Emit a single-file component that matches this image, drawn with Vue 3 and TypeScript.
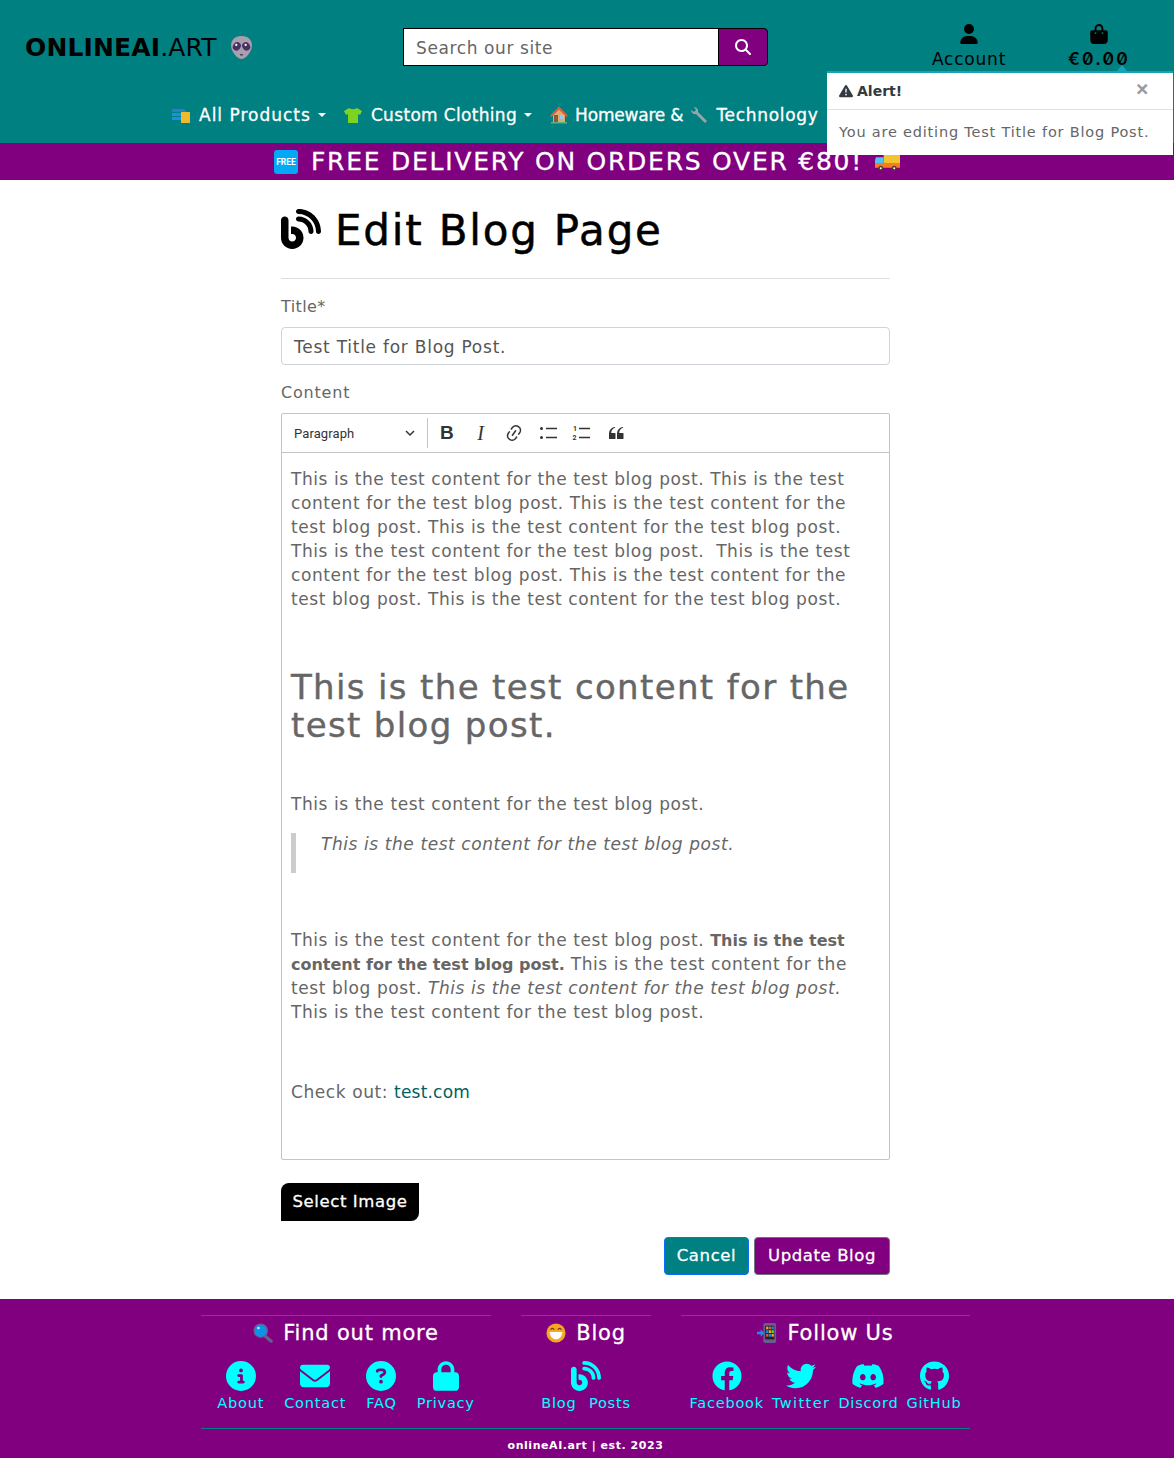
<script setup lang="ts">
const paths = {
  user: "M224 256A128 128 0 1 0 224 0a128 128 0 1 0 0 256zm-45.7 48C79.8 304 0 383.8 0 482.3C0 498.7 13.3 512 29.7 512H418.3c16.4 0 29.7-13.3 29.7-29.7C448 383.8 368.2 304 269.7 304H178.3z",
  bag: "M160 112c0-35.3 28.7-64 64-64s64 28.7 64 64v48H160V112zm-48 48H48c-26.5 0-48 21.5-48 48V416c0 53 43 96 96 96H352c53 0 96-43 96-96V208c0-26.5-21.5-48-48-48H336V112C336 50.1 285.9 0 224 0S112 50.1 112 112v48zm24 48a24 24 0 1 1 0 48 24 24 0 1 1 0-48zm152 24a24 24 0 1 1 48 0 24 24 0 1 1 -48 0z",
  search: "M416 208c0 45.9-14.9 88.3-40 122.7L502.6 457.4c12.5 12.5 12.5 32.8 0 45.3s-32.8 12.5-45.3 0L330.7 376c-34.4 25.2-76.8 40-122.7 40C93.1 416 0 322.9 0 208S93.1 0 208 0S416 93.1 416 208zM208 352a144 144 0 1 0 0-288 144 144 0 1 0 0 288z",
  warn: "M256 32c14.2 0 27.3 7.5 34.5 19.8l216 368c7.3 12.4 7.3 27.7 .2 40.1S486.3 480 472 480H40c-14.3 0-27.6-7.7-34.7-20.1s-7-27.8 .2-40.1l216-368C228.7 39.5 241.8 32 256 32zm0 128c-13.3 0-24 10.7-24 24V296c0 13.3 10.7 24 24 24s24-10.7 24-24V184c0-13.3-10.7-24-24-24zm32 224a32 32 0 1 0 -64 0 32 32 0 1 0 64 0z",
  blog: "M192 32c0 17.7 14.3 32 32 32c123.7 0 224 100.3 224 224c0 17.7 14.3 32 32 32s32-14.3 32-32C512 128.9 383.1 0 224 0c-17.7 0-32 14.3-32 32zm0 96c0 17.7 14.3 32 32 32c70.7 0 128 57.3 128 128c0 17.7 14.3 32 32 32s32-14.3 32-32c0-106-86-192-192-192c-17.7 0-32 14.3-32 32zM96 144c0-26.5-21.5-48-48-48S0 117.5 0 144V368c0 79.5 64.5 144 144 144s144-64.5 144-144s-64.5-144-144-144H128v96h16c26.5 0 48 21.5 48 48s-21.5 48-48 48s-48-21.5-48-48V144z",
  info: "M256 512A256 256 0 1 0 256 0a256 256 0 1 0 0 512zM216 336h24V272H216c-13.3 0-24-10.7-24-24s10.7-24 24-24h48c13.3 0 24 10.7 24 24v88h8c13.3 0 24 10.7 24 24s-10.7 24-24 24H216c-13.3 0-24-10.7-24-24s10.7-24 24-24zm40-208a32 32 0 1 1 0 64 32 32 0 1 1 0-64z",
  mail: "M48 64C21.5 64 0 85.5 0 112c0 15.1 7.1 29.3 19.2 38.4L236.8 313.6c11.4 8.5 27 8.5 38.4 0L492.8 150.4c12.1-9.1 19.2-23.3 19.2-38.4c0-26.5-21.5-48-48-48H48zM0 176V384c0 35.3 28.7 64 64 64H448c35.3 0 64-28.7 64-64V176L294.4 339.2c-22.8 17.1-54 17.1-76.8 0L0 176z",
  help: "M256 512A256 256 0 1 0 256 0a256 256 0 1 0 0 512zM169.8 165.3c7.9-22.3 29.1-37.3 52.8-37.3h58.3c34.9 0 63.1 28.3 63.1 63.1c0 22.6-12.1 43.5-31.7 54.8L280 264.4c-.2 13-10.9 23.6-24 23.6c-13.3 0-24-10.7-24-24V250.5c0-8.6 4.6-16.5 12.1-20.8l44.3-25.4c4.7-2.7 7.6-7.7 7.6-13.1c0-8.4-6.8-15.1-15.1-15.1H222.6c-3.4 0-6.4 2.1-7.5 5.3l-.4 1.2c-4.4 12.5-18.2 19-30.6 14.6s-19-18.2-14.6-30.6l.4-1.2zM224 352a32 32 0 1 1 64 0 32 32 0 1 1 -64 0z",
  lock: "M144 144v48H304V144c0-44.2-35.8-80-80-80s-80 35.8-80 80zM80 192V144C80 64.5 144.5 0 224 0s144 64.5 144 144v48h16c35.3 0 64 28.7 64 64V448c0 35.3-28.7 64-64 64H64c-35.3 0-64-28.7-64-64V256c0-35.3 28.7-64 64-64H80z",
  facebook: "M504 256C504 119 393 8 256 8S8 119 8 256c0 123.78 90.69 226.38 209.25 245V327.69h-63V256h63v-54.64c0-62.15 37-96.48 93.67-96.48 27.14 0 55.52 4.84 55.52 4.84v61h-31.28c-30.8 0-40.41 19.12-40.41 38.73V256h68.78l-11 71.69h-57.78V501C413.31 482.38 504 379.78 504 256z",
  twitter: "M459.37 151.716c.325 4.548.325 9.097.325 13.645 0 138.72-105.583 298.558-298.558 298.558-59.452 0-114.68-17.219-161.137-47.106 8.447.974 16.568 1.299 25.34 1.299 49.055 0 94.213-16.568 130.274-44.832-46.132-.975-84.792-31.188-98.112-72.772 6.498.974 12.995 1.624 19.818 1.624 9.421 0 18.843-1.3 27.614-3.573-48.081-9.747-84.143-51.98-84.143-102.985v-1.299c13.969 7.797 30.214 12.67 47.431 13.319-28.264-18.843-46.781-51.005-46.781-87.391 0-19.492 5.197-37.36 14.294-52.954 51.655 63.675 129.3 105.258 216.365 109.807-1.624-7.797-2.599-15.918-2.599-24.04 0-57.828 46.782-104.934 104.934-104.934 30.213 0 57.502 12.67 76.67 33.137 23.715-4.548 46.456-13.32 66.599-25.34-7.798 24.366-24.366 44.833-46.132 57.827 21.117-2.273 41.584-8.122 60.426-16.243-14.292 20.791-32.161 39.308-52.628 54.253z",
  discord: "M524.531,69.836a1.5,1.5,0,0,0-.764-.7A485.065,485.065,0,0,0,404.081,32.03a1.816,1.816,0,0,0-1.923.91,337.461,337.461,0,0,0-14.9,30.6,447.848,447.848,0,0,0-134.426,0,309.541,309.541,0,0,0-15.135-30.6,1.89,1.89,0,0,0-1.924-.91A483.689,483.689,0,0,0,116.085,69.137a1.712,1.712,0,0,0-.788.676C39.068,183.651,18.186,294.69,28.43,404.354a2.016,2.016,0,0,0,.765,1.375A487.666,487.666,0,0,0,176.02,479.918a1.9,1.9,0,0,0,2.063-.676A348.2,348.2,0,0,0,208.12,430.4a1.86,1.86,0,0,0-1.019-2.588,321.173,321.173,0,0,1-45.868-21.853,1.885,1.885,0,0,1-.185-3.126c3.082-2.309,6.166-4.711,9.109-7.137a1.819,1.819,0,0,1,1.9-.256c96.229,43.917,200.41,43.917,295.5,0a1.812,1.812,0,0,1,1.924.233c2.944,2.426,6.027,4.851,9.132,7.16a1.884,1.884,0,0,1-.162,3.126,301.407,301.407,0,0,1-45.89,21.83,1.875,1.875,0,0,0-1,2.611,391.055,391.055,0,0,0,30.014,48.815,1.864,1.864,0,0,0,2.063.7A486.048,486.048,0,0,0,610.7,405.729a1.882,1.882,0,0,0,.765-1.352C623.729,277.594,590.933,167.465,524.531,69.836ZM222.491,337.58c-28.972,0-52.844-26.587-52.844-59.239S193.056,219.1,222.491,219.1c29.665,0,53.306,26.82,52.843,59.239C275.334,310.993,251.924,337.58,222.491,337.58Zm195.38,0c-28.971,0-52.843-26.587-52.843-59.239S388.437,219.1,417.871,219.1c29.667,0,53.307,26.82,52.844,59.239C470.715,310.993,447.538,337.58,417.871,337.58Z",
  github: "M165.9 397.4c0 2-2.3 3.6-5.2 3.6-3.3 0-5.6-1.6-5.6-3.6 0-2 2.3-3.6 5.2-3.6 3-.3 5.6 1.3 5.6 3.6zm-31.1-4.5c-.7 2 1.3 4.3 4.3 4.9 2.6 1 5.6 0 6.2-2s-1.3-4.3-4.3-5.2c-2.6-.7-5.5.3-6.2 2.3zm44.2-1.7c-2.9.7-4.9 2.6-4.6 4.9.3 2 2.9 3.3 5.9 2.6 2.9-.7 4.9-2.6 4.6-4.6-.3-1.9-3-3.2-5.9-2.9zM244.8 8C106.1 8 0 113.3 0 252c0 110.9 69.8 205.8 169.5 239.2 12.8 2.3 17.3-5.6 17.3-12.1 0-6.2-.3-40.4-.3-61.4 0 0-70 15-84.7-29.8 0 0-11.4-29.1-27.8-36.6 0 0-22.9-15.7 1.6-15.4 0 0 24.9 2 38.6 25.8 21.9 38.6 58.6 27.5 72.9 20.9 2.3-16 8.8-27.1 16-33.7-55.9-6.2-112.3-14.3-112.3-110.5 0-27.5 7.6-41.3 23.6-58.9-2.6-6.5-11.1-33.3 2.6-67.9 20.9-6.5 69 27 69 27 20-5.6 41.5-8.5 62.8-8.5s42.8 2.9 62.8 8.5c0 0 48.1-33.6 69-27 13.7 34.7 5.2 61.4 2.6 67.9 16 17.7 25.8 31.5 25.8 58.9 0 96.5-58.9 104.2-114.8 110.5 9.2 7.9 17 22.9 17 46.4 0 33.7-.3 75.4-.3 83.6 0 6.5 4.6 14.4 17.3 12.1C428.2 457.8 496 362.9 496 252 496 113.3 383.5 8 244.8 8z",
};

const infoLinks = [
  { label: "About", box: "0 0 512 512", d: paths.info, w: 30 },
  { label: "Contact", box: "0 0 512 512", d: paths.mail, w: 30 },
  { label: "FAQ", box: "0 0 512 512", d: paths.help, w: 30 },
  { label: "Privacy", box: "0 0 448 512", d: paths.lock, w: 26 },
];
const followLinks = [
  { label: "Facebook", box: "0 0 512 512", d: paths.facebook, w: 30 },
  { label: "Twitter", box: "0 0 512 512", d: paths.twitter, w: 30 },
  { label: "Discord", box: "0 0 640 512", d: paths.discord, w: 34 },
  { label: "GitHub", box: "0 0 496 512", d: paths.github, w: 29 },
];
</script>

<template>
  <div class="page">
    <header class="site-head">
      <div class="top-row">
        <div class="logo">
          <span class="logo-text">ONLINEAI<span class="logo-thin">.ART</span></span>
          <svg class="alien" viewBox="0 0 24 24">
            <path d="M12 1C5.5 1 2 5 2 10c0 6 6 13 10 13s10-7 10-13c0-5-3.500-9-10-9z" fill="#a99fae" />
            <ellipse cx="7.500" cy="11" rx="3.600" ry="4.200" fill="#4a2f63" transform="rotate(35 7.500 11)" />
            <ellipse cx="16.500" cy="11" rx="3.600" ry="4.200" fill="#4a2f63" transform="rotate(-35 16.500 11)" />
            <circle cx="7" cy="9.500" r="1.100" fill="#fff" />
            <circle cx="16" cy="9.500" r="1.100" fill="#fff" />
            <path d="M10.500 19h3" stroke="#4a2f63" stroke-width="1.200" />
          </svg>
        </div>
        <div class="search">
          <div class="search-input">Search our site</div>
          <div class="search-btn">
            <svg viewBox="0 0 512 512" width="16" height="16"><path :d="paths.search" fill="#fff" /></svg>
          </div>
        </div>
        <div class="head-link account">
          <svg viewBox="0 0 448 512" width="18" height="20"><path :d="paths.user" fill="#000" /></svg>
          <span>Account</span>
        </div>
        <div class="head-link">
          <svg viewBox="0 0 448 512" width="18" height="20"><path :d="paths.bag" fill="#000" /></svg>
          <span class="price">€0.00</span>
        </div>
      </div>
      <nav class="nav-row">
        <svg class="emo" viewBox="0 0 18 18">
          <rect x="0" y="3" width="12" height="3" fill="#1b8fe0" />
          <rect x="0" y="7" width="12" height="3" fill="#1b8fe0" />
          <rect x="0" y="11" width="12" height="3" fill="#1b8fe0" />
          <rect x="9" y="6" width="9" height="11" fill="#efb92e" />
          <path d="M0 3h12l2 2v1H0z" fill="#2a7fc9" />
        </svg>
        <span class="nav-item n-all">All Products</span><i class="caret"></i>
        <svg class="emo emo-b" viewBox="0 0 18 18">
          <path d="M5 2c1.500 1.500 6.500 1.500 8 0l5 3-2 4-2-1v9H4V8L2 9 0 5z" fill="#7ed321" />
        </svg>
        <span class="nav-item n-custom">Custom Clothing</span><i class="caret"></i>
        <svg class="emo emo-c" viewBox="0 0 18 18">
          <path d="M9 1 1 9h2v7h12V9h2z" fill="#e0a96d" />
          <path d="M9 1 0 10l1.500 1L9 3.500 16.500 11 18 10z" fill="#e5543b" />
          <rect x="4" y="9" width="4" height="7" fill="#8a5a3c" />
          <rect x="10" y="9" width="4" height="4" fill="#8ccdf0" />
          <rect x="1" y="16" width="16" height="1.500" fill="#59b383" />
        </svg>
        <span class="nav-item n-home">Homeware &amp;</span>
        <svg class="emo emo-d" viewBox="0 0 18 18">
          <path d="M1 4a4 4 0 0 0 5 4l9 9 2-2-9-9a4 4 0 0 0-4-5l2 3-2 2z" fill="#9aa4ad" />
        </svg>
        <span class="nav-item n-tech">Technology</span>
      </nav>
      <div class="banner">
        <svg class="free" viewBox="0 0 24 24">
          <rect width="24" height="24" rx="3" fill="#03a9f4" />
          <text x="12" y="15" text-anchor="middle" font-size="8.500" font-weight="700" font-family="Roboto, sans-serif" fill="#fff">FREE</text>
        </svg>
        <span>FREE DELIVERY ON ORDERS OVER €80!</span>
        <svg class="truck" viewBox="0 0 26 20">
          <path d="M9 0h17v13H9z" fill="#f4c430" />
          <path d="M1 5h8v9H0V8z" fill="#4fc3f7" />
          <path d="M0 11h26v5H0z" fill="#f57c20" />
          <circle cx="6" cy="16.500" r="2.500" fill="#5a3a2e" />
          <circle cx="20" cy="16.500" r="2.500" fill="#5a3a2e" />
          <circle cx="6" cy="16.500" r="1" fill="#fff" />
          <circle cx="20" cy="16.500" r="1" fill="#fff" />
        </svg>
      </div>

      <div class="alert">
        <i class="alert-arrow"></i>
        <div class="alert-head">
          <svg viewBox="0 0 512 512" width="14" height="14"><path :d="paths.warn" fill="#343a40" /></svg>
          <strong>Alert!</strong>
          <span class="alert-x">✕</span>
        </div>
        <div class="alert-body">You are editing Test Title for Blog Post.</div>
      </div>
    </header>

    <main class="content">
      <h1 class="title">
        <svg viewBox="0 0 512 512" width="40" height="40"><path :d="paths.blog" fill="#000" /></svg>
        <span>Edit Blog Page</span>
      </h1>
      <hr class="rule" />
      <label class="field-label">Title*</label>
      <div class="text-input">Test Title for Blog Post.</div>
      <label class="field-label second">Content</label>

      <div class="editor">
        <div class="toolbar">
          <div class="style-pick">
            <span>Paragraph</span>
            <svg viewBox="0 0 10 10" width="10" height="10"><path d="M1 3l4 4 4-4" fill="none" stroke="#333" stroke-width="1.500" /></svg>
          </div>
          <span class="tool-sep"></span>
          <span class="tool t-bold">B</span>
          <span class="tool t-ital">I</span>
          <span class="tool">
            <svg viewBox="0 0 20 20" width="20" height="20"><path fill="#333" d="m11.077 15 .991-1.416a.75.75 0 1 1 1.229.86l-1.148 1.64a.748.748 0 0 1-.217.206 5.251 5.251 0 0 1-8.503-5.955.741.741 0 0 1 .12-.274l1.147-1.639a.75.75 0 1 1 1.228.86L4.933 10.7l.006.003a3.75 3.75 0 0 0 6.132 4.294l.006.004zm5.494-5.335a.748.748 0 0 1-.12.274l-1.147 1.639a.75.75 0 1 1-1.228-.86l.86-1.23a3.75 3.75 0 0 0-6.144-4.301l-.86 1.229a.75.75 0 0 1-1.229-.86l1.148-1.64a.748.748 0 0 1 .217-.206 5.251 5.251 0 0 1 8.503 5.955zm-4.563-2.532a.75.75 0 0 1 .184 1.045l-3.155 4.505a.75.75 0 1 1-1.229-.86l3.155-4.506a.75.75 0 0 1 1.045-.184z" /></svg>
          </span>
          <span class="tool">
            <svg viewBox="-1 0 20 20" width="20" height="20">
              <circle cx="2.500" cy="5.500" r="1.500" fill="#333" /><circle cx="2.500" cy="14.500" r="1.500" fill="#333" />
              <path d="M7 5.500h11M7 14.500h11" stroke="#333" stroke-width="1.500" />
            </svg>
          </span>
          <span class="tool">
            <svg viewBox="0 0 20 20" width="20" height="20">
              <text x="1" y="8" font-size="7" font-weight="700" font-family="Roboto, sans-serif" fill="#333">1</text>
              <text x="0.500" y="17" font-size="7" font-weight="700" font-family="Roboto, sans-serif" fill="#333">2</text>
              <path d="M7 5.500h11M7 14.500h11" stroke="#333" stroke-width="1.500" />
            </svg>
          </span>
          <span class="tool">
            <svg viewBox="0 0 20 20" width="20" height="20"><path fill="#333" d="M3 10.423a6.5 6.5 0 0 1 6.056-6.408l.038.67C6.448 5.423 5.354 7.663 5.22 10H9c.552 0 .5.432.5.986v4.511c0 .554-.448.503-1 .503h-5c-.552 0-.5-.449-.5-1.003v-4.574zm8 0a6.5 6.5 0 0 1 6.056-6.408l.038.67c-2.646.739-3.74 2.979-3.873 5.315H17c.552 0 .5.432.5.986v4.511c0 .554-.448.503-1 .503h-5c-.552 0-.5-.449-.5-1.003v-4.574z" /></svg>
          </span>
        </div>
        <div class="editor-body">
          <p>This is the test content for the test blog post. This is the test<br />content for the test blog post. This is the test content for the<br />test blog post. This is the test content for the test blog post.<br />This is the test content for the test blog post.&nbsp; This is the test<br />content for the test blog post. This is the test content for the<br />test blog post. This is the test content for the test blog post.</p>
          <h2>This is the test content for the<br />test blog post.</h2>
          <p class="after-h2">This is the test content for the test blog post.</p>
          <blockquote>This is the test content for the test blog post.</blockquote>
          <p class="after-quote">This is the test content for the test blog post. <strong>This is the test<br />content for the test blog post.</strong> This is the test content for the<br />test blog post. <em>This is the test content for the test blog post.</em><br />This is the test content for the test blog post.</p>
          <p class="check">Check out: <a>test.com</a></p>
        </div>
      </div>

      <div class="btn btn-image">Select Image</div>
      <div class="actions">
        <div class="btn btn-cancel">Cancel</div>
        <div class="btn btn-update">Update Blog</div>
      </div>
    </main>

    <footer class="site-foot">
      <div class="foot-cols">
        <section class="foot-col col-info">
          <h3>
            <svg class="h-emo" viewBox="0 0 22 22">
              <path d="M13 14l7 6" stroke="#6b5b95" stroke-width="3.500" stroke-linecap="round" />
              <circle cx="8.500" cy="8.500" r="8" fill="#6b5b95" />
              <circle cx="8.500" cy="8.500" r="6.500" fill="#0b93e8" />
              <circle cx="6" cy="5.500" r="1.500" fill="#bfe6ff" />
            </svg>
            Find out more
          </h3>
          <div class="foot-links">
            <div v-for="l in infoLinks" :key="l.label" class="foot-link">
              <svg :viewBox="l.box" :width="l.w" height="30"><path :d="l.d" fill="#00ffff" /></svg>
              <span>{{ l.label }}</span>
            </div>
          </div>
        </section>
        <section class="foot-col col-blog">
          <h3>
            <svg class="h-emo" viewBox="0 0 22 22">
              <circle cx="11" cy="11" r="10.500" fill="#f5a623" />
              <path d="M4 10h14c0 4.500-3 8-7 8s-7-3.500-7-8z" fill="#fff" />
              <path d="M5 7.500c1-2 3-2 4 0M13 7.500c1-2 3-2 4 0" fill="none" stroke="#6d3a10" stroke-width="1.300" />
            </svg>
            Blog
          </h3>
          <div class="foot-links">
            <div class="foot-link blog-link">
              <svg viewBox="0 0 512 512" width="30" height="30"><path :d="paths.blog" fill="#00ffff" /></svg>
              <span>Blog Posts</span>
            </div>
          </div>
        </section>
        <section class="foot-col col-follow">
          <h3>
            <svg class="h-emo" viewBox="0 0 22 22">
              <rect x="7" y="0" width="14" height="22" rx="2" fill="#6b5b95" />
              <rect x="9" y="3" width="10" height="15" fill="#222" />
              <rect x="10" y="4" width="2.500" height="3" fill="#f5a623" /><rect x="13" y="4" width="2.500" height="3" fill="#e5543b" /><rect x="16" y="4" width="2.500" height="3" fill="#0b93e8" />
              <rect x="10" y="8" width="2.500" height="3" fill="#0b93e8" /><rect x="13" y="8" width="2.500" height="3" fill="#f5a623" /><rect x="16" y="8" width="2.500" height="3" fill="#7ed321" />
              <rect x="10" y="12" width="2.500" height="3" fill="#e5543b" /><rect x="13" y="12" width="2.500" height="3" fill="#0b93e8" /><rect x="16" y="12" width="2.500" height="3" fill="#f5a623" />
              <path d="M0 9.500h4V7l4 4-4 4v-2.500H0z" fill="#1b8fe0" />
            </svg>
            Follow Us
          </h3>
          <div class="foot-links">
            <div v-for="l in followLinks" :key="l.label" class="foot-link">
              <svg :viewBox="l.box" :width="l.w" height="30"><path :d="l.d" fill="#00ffff" /></svg>
              <span>{{ l.label }}</span>
            </div>
          </div>
        </section>
      </div>
      <div class="copyright">onlineAI.art | est. 2023</div>
    </footer>
  </div>
</template>

<style>
html,
body {
  margin: 0;
  background: #fff;
}
</style>

<style scoped>
.page {
  font-family: "DejaVu Sans", sans-serif;
  color: #666;
  width: 1174px;
  height: 1458px;
  overflow: hidden;
}

/* header */
.site-head {
  position: relative;
  background: #008080;
}
.top-row {
  display: flex;
  height: 93px;
  padding-top: 28px;
  box-sizing: border-box;
}
.logo {
  width: 403px;
  padding-left: 25px;
  box-sizing: border-box;
  display: flex;
  align-items: center;
  height: 38px;
  color: #000;
  font-size: 25px;
  letter-spacing: 0.15px;
  font-weight: 700;
}
.logo-thin {
  font-weight: 400;
}
.alien {
  width: 25px;
  height: 25px;
  margin-left: 12px;
}
.search {
  width: 365px;
  height: 38px;
  display: flex;
}
.search-input {
  flex: 1;
  background: #fff;
  border: 1px solid #000;
  box-sizing: border-box;
  padding: 0 12px;
  line-height: 38px;
  font-size: 17px;
  letter-spacing: 0.6px;
  color: #666;
  white-space: nowrap;
}
.search-btn {
  width: 50px;
  margin-left: -1px;
  background: #800080;
  border: 1px solid #000;
  border-radius: 0 4px 4px 0;
  box-sizing: border-box;
  display: flex;
  align-items: center;
  justify-content: center;
}
.head-link {
  width: 130px;
  height: 46px;
  margin-top: -4px;
  display: flex;
  flex-direction: column;
  align-items: center;
  color: #000;
  font-size: 17px;
  letter-spacing: 0.8px;
  line-height: 22px;
  gap: 4px;
}
.account {
  margin-left: 136px;
}
.price {
  font-family: Inter, sans-serif;
  font-weight: 600;
  font-size: 17.500px;
  letter-spacing: 2.200px;
  font-feature-settings: "zero";
}
.nav-row {
  height: 50px;
  padding-left: 172px;
  display: flex;
  align-items: center;
  color: #fff;
  font-size: 17px;
  box-sizing: border-box;
  padding-bottom: 7px;
}
.nav-item {
  white-space: nowrap;
  -webkit-text-stroke: 0.3px #fff;
}
.n-all {
  letter-spacing: 1px;
}
.n-custom {
  letter-spacing: 0.33px;
}
.n-home {
  letter-spacing: -0.2px;
}
.n-tech {
  letter-spacing: 0.7px;
}
.emo {
  width: 18px;
  height: 18px;
  margin-right: 9px;
  flex: none;
}
.emo-b {
  margin-left: 18px;
}
.emo-c {
  margin-left: 18px;
  margin-right: 7px;
}
.emo-d {
  margin-left: 7px;
  margin-right: 8px;
}
.caret {
  width: 0;
  height: 0;
  margin-left: 7px;
  border-left: 4px solid transparent;
  border-right: 4px solid transparent;
  border-top: 4px solid #fff;
}
.banner {
  height: 37px;
  background: #800080;
  color: #fff;
  font-size: 25px;
  letter-spacing: 1.750px;
  -webkit-text-stroke: 0.3px #fff;
  display: flex;
  align-items: center;
  justify-content: center;
  white-space: nowrap;
}
.free {
  width: 24px;
  height: 24px;
  margin-right: 13px;
}
.free text {
  letter-spacing: 0;
  -webkit-text-stroke: 0;
}
.truck {
  width: 25px;
  height: 20px;
  margin-left: 12px;
}
.alert {
  position: absolute;
  left: 827px;
  top: 71px;
  width: 346px;
  height: 84px;
  background: #fff;
  border-top: 2px solid #17a2b8;
  box-sizing: border-box;
}
.alert-arrow {
  position: absolute;
  left: 290px;
  top: -8px;
  width: 0;
  height: 0;
  border-left: 5px solid transparent;
  border-right: 5px solid transparent;
  border-bottom: 6px solid #17a2b8;
}
.alert-head {
  height: 36px;
  border-bottom: 1px solid #dee2e6;
  display: flex;
  align-items: center;
  padding: 0 12px;
  color: #343a40;
  font-size: 14px;
  gap: 4px;
}
.alert-x {
  margin-left: auto;
  margin-top: -4px;
  margin-right: 12px;
  color: #999;
  font-weight: 700;
  font-size: 16px;
  -webkit-text-stroke: 0.8px #999;
}
.alert-body {
  padding: 0 12px;
  line-height: 44px;
  font-size: 14.500px;
  letter-spacing: 0.8px;
  color: #666;
  white-space: nowrap;
}

/* main form */
.content {
  width: 609px;
  margin-left: 281px;
  height: 1119px;
}
.title {
  display: flex;
  align-items: center;
  gap: 14px;
  height: 98px;
  margin: 0;
  padding-top: 2px;
  box-sizing: border-box;
  color: #000;
  font-size: 42px;
  letter-spacing: 1.800px;
  font-weight: 400;
  white-space: nowrap;
  -webkit-text-stroke: 0.5px #000;
}
.title svg {
  margin-top: -2px;
}
.rule {
  margin: 0;
  border: 0;
  border-top: 1px solid #dfdfdf;
}
.field-label {
  display: block;
  margin-top: 16px;
  height: 24px;
  line-height: 24px;
  font-size: 16px;
  letter-spacing: 0.4px;
  color: #666;
}
.field-label.second {
  margin-top: 15px;
  line-height: 26px;
  letter-spacing: 0.8px;
}
.text-input {
  margin-top: 8px;
  height: 38px;
  border: 1px solid #ced4da;
  border-radius: 4px;
  box-sizing: border-box;
  padding: 0 12px;
  line-height: 38px;
  font-size: 17px;
  letter-spacing: 0.75px;
  color: #555;
}
.field-label.second + .editor {
  margin-top: 9px;
}
.editor {
  height: 747px;
  box-sizing: border-box;
  border: 1px solid #c4c4c4;
  border-radius: 2px;
  display: flex;
  flex-direction: column;
}
.toolbar {
  height: 39px;
  flex: none;
  border-bottom: 1px solid #c4c4c4;
  display: flex;
  align-items: center;
  box-sizing: border-box;
  color: #333;
}
.style-pick {
  width: 145px;
  padding: 0 12px;
  box-sizing: border-box;
  display: flex;
  align-items: center;
  justify-content: space-between;
  font-family: Roboto, sans-serif;
  font-size: 13px;
  letter-spacing: 0.1px;
  color: #333;
}
.tool-sep {
  width: 1px;
  height: 30px;
  background: #c4c4c4;
  margin-right: 2px;
}
.tool {
  width: 33.800px;
  height: 24px;
  display: flex;
  align-items: center;
  justify-content: center;
}
.t-bold {
  font-family: "Liberation Sans", sans-serif;
  font-weight: 700;
  font-size: 19px;
}
.t-ital {
  font-family: "Liberation Serif", serif;
  font-style: italic;
  font-size: 20px;
}
.editor-body {
  padding: 14px 9px 0;
  font-size: 17px;
  line-height: 24px;
  letter-spacing: 0.58px;
  color: #666;
  white-space: nowrap;
}
.editor-body p {
  margin: 0;
}
.editor-body strong {
  font-size: 16px;
  line-height: 0;
  letter-spacing: 0;
}
.editor-body h2 {
  margin: 57px 0 0;
  font-size: 34px;
  line-height: 38px;
  font-weight: 400;
  letter-spacing: 1.350px;
  -webkit-text-stroke: 0.4px #666;
  color: #666;
}
.editor-body .after-h2 {
  margin-top: 48px;
}
.editor-body blockquote {
  margin: 17px 0 0;
  height: 40px;
  border-left: 5px solid #ccc;
  padding-left: 25px;
  font-style: italic;
  line-height: 22px;
}
.editor-body .after-quote {
  margin-top: 55px;
}
.editor-body .check {
  margin-top: 56px;
}
.editor-body a {
  color: #005f5f;
  letter-spacing: 0.2px;
}
.btn {
  height: 38px;
  line-height: 36px;
  box-sizing: border-box;
  border: 1px solid transparent;
  font-size: 16.500px;
  letter-spacing: 0.6px;
  -webkit-text-stroke: 0.3px #fff;
  color: #fff;
  padding: 0 12px;
  text-align: center;
  white-space: nowrap;
}
.btn-image {
  margin-top: 23px;
  width: 138px;
  padding: 0;
  background: #000;
  border-radius: 8px 0 8px 0;
}
.actions {
  margin-top: 16px;
  display: flex;
  justify-content: flex-end;
  gap: 5px;
}
.btn-cancel {
  width: 85px;
  background: #008080;
  border-color: #0d6efd;
  border-radius: 4px;
  padding: 0;
}
.btn-update {
  width: 136px;
  background: #800080;
  border-color: #6c757d;
  border-radius: 4px;
  padding: 0;
}

/* footer */
.site-foot {
  height: 159px;
  background: #800080;
  padding: 16px 0 0 201px;
  box-sizing: border-box;
}
.foot-cols {
  width: 769px;
  height: 114px;
  display: flex;
  gap: 30px;
  border-bottom: 1px solid #008080;
  box-sizing: border-box;
}
.foot-col {
  border-top: 1px solid #008080;
  box-sizing: border-box;
}
.col-info {
  width: 290px;
}
.col-blog {
  width: 130px;
}
.col-follow {
  width: 289px;
}
.foot-col h3 {
  margin: 0;
  height: 34px;
  display: flex;
  align-items: center;
  justify-content: center;
  gap: 10px;
  color: #fff;
  font-size: 21px;
  letter-spacing: 0.8px;
  font-weight: 400;
  -webkit-text-stroke: 0.3px #fff;
  white-space: nowrap;
}
.h-emo {
  width: 20px;
  height: 20px;
}
.foot-links {
  display: flex;
  justify-content: center;
  margin-top: 11px;
}
.col-info .foot-links {
  gap: 20px;
}
.col-follow .foot-links {
  gap: 8px;
}
.col-follow .foot-link:nth-child(2) {
  letter-spacing: 1.400px;
}
.foot-link {
  display: flex;
  flex-direction: column;
  align-items: center;
  color: #00ffff;
  font-size: 14.500px;
  letter-spacing: 0.8px;
  gap: 2px;
  line-height: 20px;
  white-space: nowrap;
}
.blog-link {
  word-spacing: 7px;
}
.copyright {
  width: 769px;
  margin-top: 10px;
  text-align: center;
  color: #fff;
  font-size: 11px;
  font-weight: 700;
  letter-spacing: 0.55px;
}
</style>
